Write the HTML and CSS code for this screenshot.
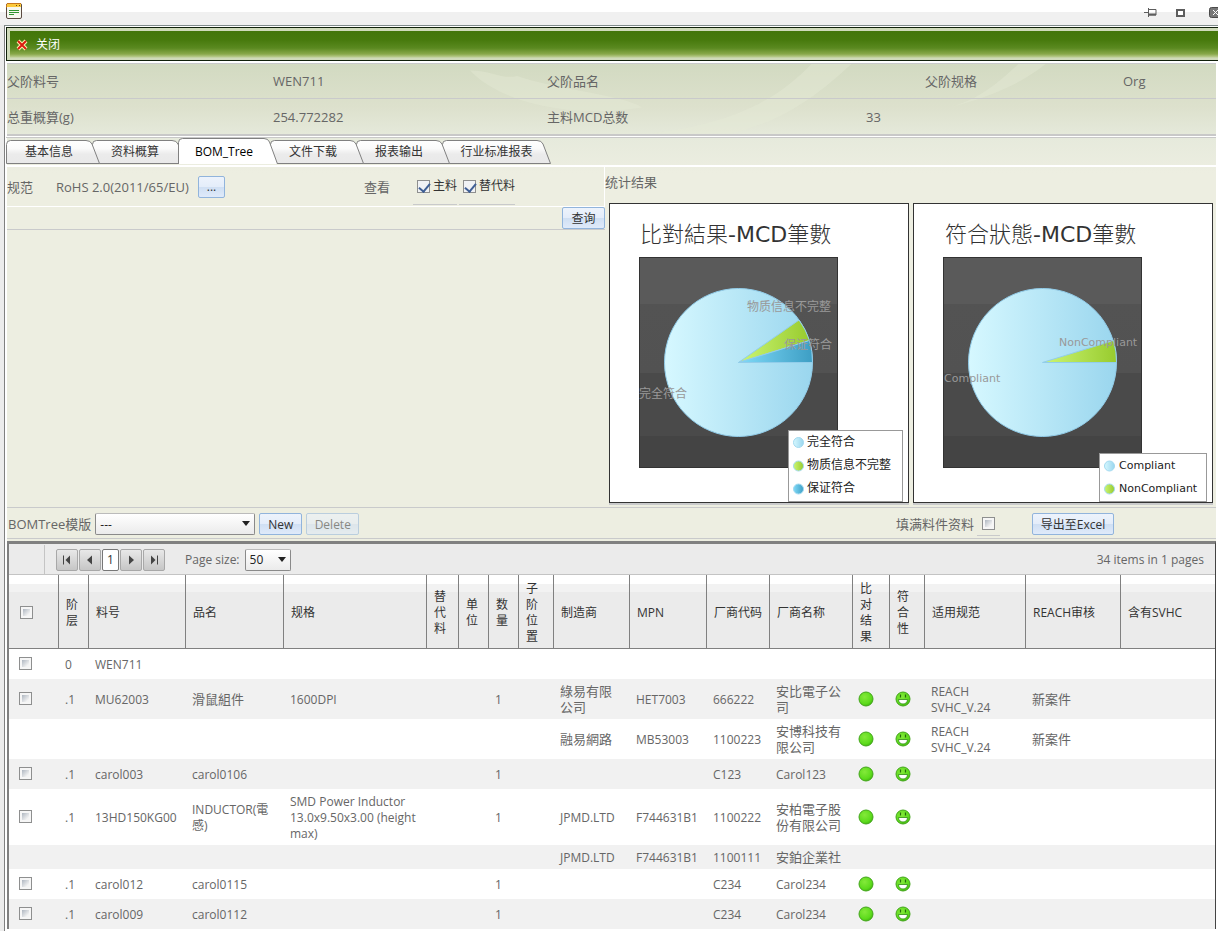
FILE: index.html
```
<!DOCTYPE html>
<html lang="zh-CN">
<head>
<meta charset="utf-8">
<title>BOM_Tree</title>
<link rel="stylesheet" href="styles.css">
</head>
<body>
<svg class="defs" aria-hidden="true">
  <defs>
    <linearGradient id="tabfill" x1="0" y1="0" x2="0" y2="1"><stop offset="0" stop-color="#fff"/><stop offset="0.35" stop-color="#fafafa"/><stop offset="0.6" stop-color="#ebebeb"/><stop offset="1" stop-color="#e9e9e9"/></linearGradient>
    <linearGradient id="blue"><stop offset="0" stop-color="#d6f8ff"/><stop offset="1" stop-color="#9ad6ee"/></linearGradient>
    <linearGradient id="lime"><stop offset="0" stop-color="#ccf674"/><stop offset="1" stop-color="#98cb2e"/></linearGradient>
    <linearGradient id="teal"><stop offset="0" stop-color="#80daf8"/><stop offset="1" stop-color="#3d9ec4"/></linearGradient>
    <linearGradient id="plot" x1="0" y1="0" x2="0" y2="1"><stop offset="0.22" stop-color="#5a5a5a"/><stop offset="0.22" stop-color="#535353"/><stop offset="0.55" stop-color="#525252"/><stop offset="0.55" stop-color="#4a4a4a"/><stop offset="0.85" stop-color="#4a4a4a"/><stop offset="0.85" stop-color="#444"/></linearGradient>
    <radialGradient id="ball" cx="0.4" cy="0.35" r="0.7"><stop offset="0" stop-color="#84e93a"/><stop offset="0.7" stop-color="#5ddb1c"/><stop offset="1" stop-color="#3eb50c"/></radialGradient>
    <symbol id="dot" viewBox="0 0 16 16"><circle cx="8" cy="8" r="7" fill="url(#ball)" stroke="#43a51b"/></symbol>
    <symbol id="smile" viewBox="0 0 16 16"><circle cx="8" cy="8" r="7" fill="url(#ball)" stroke="#43a51b"/><path d="M5.500 3.500v3M10.500 3.500v3" stroke="#246b0b" stroke-width="1.200"/><path d="M3.500 8.500h9c0 2.600-1.800 4.500-4.500 4.500s-4.500-1.900-4.500-4.500z" fill="#fff" stroke="#2f8d12" stroke-width="0.800"/></symbol>
  </defs>
</svg>
<header class="titlebar">
  <svg class="appicon" width="16" height="16" viewBox="0 0 16 16"><rect x="0.500" y="0.500" width="15" height="15" rx="1.500" fill="#f6f7ef" stroke="#5a4a42"/><path d="M1 1h14v3H1z" fill="#fbc93c"/><path d="M0.500 1.500v3M1 0.500h14" stroke="#c8761c"/><path d="M10 2.500h1M13 2.500h1" stroke="#6a4a10"/><path d="M3 7.500h10M3 9.500h10M3 11.500h5" stroke="#2f9430"/></svg>
  <div class="wincmds">
    <button type="button" aria-label="Pin"><svg width="13" height="9" viewBox="0 0 13 9"><path d="M0 4.500h4M4.500 0v9M4.500 1.500h7.500v5.500H4.500" fill="none" stroke="#5d5d5d"/><path d="M5 6.500h7" stroke="#5d5d5d" stroke-width="2"/></svg></button>
    <button type="button" aria-label="Maximize"><svg width="9" height="8" viewBox="0 0 9 8"><rect x="1" y="1" width="7" height="6" fill="#fff" stroke="#5d5d5d" stroke-width="2"/></svg></button>
    <button type="button" aria-label="Close"><svg width="12" height="11" viewBox="0 0 12 11"><rect x="0.500" y="0.500" width="11" height="10" rx="2" fill="#777" stroke="#4a4a4a"/><path d="M4 3l5 5M9 3l-5 5" stroke="#fff"/></svg></button>
  </div>
</header>
<main class="frame">
  <div class="toolbar">
    <button type="button" class="close"><svg width="12" height="12" viewBox="0 0 12 12"><path d="M2 2l8 8M10 2l-8 8" stroke="#fff3b0" stroke-width="4"/><path d="M2 2l8 8M10 2l-8 8" stroke="#dc1a10" stroke-width="2"/></svg>关闭</button>
  </div>
  <div class="page">
    <svg class="swoosh" viewBox="0 0 640 80" preserveAspectRatio="none" aria-hidden="true"><path d="M604 0C580 22 545 38 500 50C540 40 560 16 577 0zM28 8C50 8 60 18 75 14C110 28 180 34 200 48C130 60 60 44 28 8zM410 0C370 40 340 62 290 76H210C300 64 340 34 370 0z"/></svg>
    <dl class="info">
      <dt>父阶料号</dt><dd>WEN711</dd><dt class="span2">父阶品名</dt><dt>父阶规格</dt><dd>Org</dd>
    </dl>
    <dl class="info last">
      <dt>总重概算(g)</dt><dd>254.772282</dd><dt>主料MCD总数</dt><dd>33</dd>
    </dl>
    <nav class="tabs">
      <a href="#"><svg width="94" height="25"><path d="M0.500 24.500V5.500Q0.500 1.500 4.500 1.500H80Q84.500 1.500 86 5L93.500 24.500z"/></svg><span>基本信息</span></a>
      <a href="#"><svg width="94" height="25"><path d="M0.500 24.500V5.500Q0.500 1.500 4.500 1.500H80Q84.500 1.500 86 5L93.500 24.500z"/></svg><span>资料概算</span></a>
      <a href="#" class="on"><svg width="100" height="26"><path d="M0.500 26V4.500Q0.500 0.500 4.500 0.500H86Q90 0.500 91.500 4L99.500 26"/></svg><span>BOM_Tree</span></a>
      <a href="#"><svg width="94" height="25"><path d="M0.500 24.500V5.500Q0.500 1.500 4.500 1.500H80Q84.500 1.500 86 5L93.500 24.500z"/></svg><span>文件下载</span></a>
      <a href="#"><svg width="94" height="25"><path d="M0.500 24.500V5.500Q0.500 1.500 4.500 1.500H80Q84.500 1.500 86 5L93.500 24.500z"/></svg><span>报表输出</span></a>
      <a href="#" class="wide"><svg width="109" height="25"><path d="M0.500 24.500V5.500Q0.500 1.500 4.500 1.500H95Q99.500 1.500 101 5L108.500 24.500z"/></svg><span>行业标准报表</span></a>
    </nav>
    <div class="split">
      <section class="query">
        <div class="qrow">
          <span class="spec">规范</span><span class="rohs">RoHS 2.0(2011/65/EU)</span><button type="button" class="btn dots">...</button>
          <span class="view">查看</span>
          <label class="ck"><input type="checkbox" checked>主料</label>
          <label class="ck"><input type="checkbox" checked>替代料</label>
        </div>
        <div class="qrow2"><button type="button" class="btn">查询</button></div>
      </section>
      <section class="stats">
        <h2>统计结果</h2>
        <div class="charts">
          <svg class="chart" viewBox="0 0 300 300" width="300" height="300" role="img">
            <rect class="box" x="0.500" y="0.500" width="299" height="299"/>
            <text class="title" x="31" y="39">比對結果<tspan>-MCD</tspan>筆數</text>
            <rect class="plot" x="30.500" y="54.500" width="198" height="210"/>
            <circle class="rim" cx="129.500" cy="159.500" r="74" fill="url(#blue)"/>
            <path class="rim" fill="url(#lime)" d="M129.500 159.500L190 117A74 74 0 0 1 200.500 137.500z"/>
            <path class="rim" fill="url(#teal)" d="M129.500 159.500L200.500 137.500A74 74 0 0 1 203.500 159.500z"/>
            <g class="tag"><text x="138" y="108">物质信息不完整</text><text x="175" y="146">保证符合</text><text x="30" y="195">完全符合</text></g>
            <rect class="legend" x="179.500" y="227.500" width="114" height="71"/>
            <g class="key"><circle cx="189.500" cy="239.500" r="5" fill="url(#blue)"/><circle cx="189.500" cy="263" r="5" fill="url(#lime)"/><circle cx="189.500" cy="286" r="5" fill="url(#teal)"/></g>
            <g class="item"><text x="198" y="243">完全符合</text><text x="198" y="266">物质信息不完整</text><text x="198" y="289">保证符合</text></g>
          </svg>
          <svg class="chart" viewBox="0 0 300 300" width="300" height="300" role="img">
            <rect class="box" x="0.500" y="0.500" width="299" height="299"/>
            <text class="title" x="32" y="39">符合狀態<tspan>-MCD</tspan>筆數</text>
            <rect class="plot" x="30.500" y="54.500" width="198" height="210"/>
            <circle class="rim" cx="129.500" cy="159.500" r="74" fill="url(#blue)"/>
            <path class="rim" fill="url(#lime)" d="M129.500 159.500L200.500 137.500A74 74 0 0 1 203.500 159.500z"/>
            <g class="tag latin"><text x="146" y="143">NonCompliant</text><text x="31" y="179">Compliant</text></g>
            <rect class="legend" x="186.500" y="250.500" width="107" height="48"/>
            <g class="key"><circle cx="196.500" cy="263" r="5" fill="url(#blue)"/><circle cx="196.500" cy="286" r="5" fill="url(#lime)"/></g>
            <g class="item latin"><text x="206" y="266">Compliant</text><text x="206" y="289">NonCompliant</text></g>
          </svg>
        </div>
      </section>
    </div>
    <div class="tmpl">
      <label for="tpl">BOMTree模版</label>
      <span class="combo"><select id="tpl"><option>---</option></select></span>
      <button type="button" class="btn">New</button>
      <button type="button" class="btn" disabled>Delete</button>
      <label class="fill" for="fill">填满料件资料</label><span class="ckline"><input type="checkbox" id="fill"></span>
      <button type="button" class="btn excel">导出至Excel</button>
    </div>
    <section class="grid">
      <div class="pager">
        <span class="notch"></span>
        <button type="button" aria-label="First"><svg width="10" height="10"><path d="M1.500 0.500v9" stroke="#444"/><path d="M8 0.500v9L3.500 5z" fill="#444"/></svg></button>
        <button type="button" aria-label="Previous"><svg width="10" height="10"><path d="M7 0.500v9L2 5z" fill="#444"/></svg></button>
        <button type="button" class="cur">1</button>
        <button type="button" aria-label="Next"><svg width="10" height="10"><path d="M3 0.500v9L8 5z" fill="#444"/></svg></button>
        <button type="button" aria-label="Last"><svg width="10" height="10"><path d="M8.500 0.500v9" stroke="#444"/><path d="M2 0.500v9L6.500 5z" fill="#444"/></svg></button>
        <label for="ps">Page size:</label>
        <span class="combo small"><select id="ps"><option>50</option></select></span>
        <span class="count">34 items in 1 pages</span>
      </div>
      <table>
        <colgroup><col style="width:50px"><col style="width:30px"><col style="width:97px"><col style="width:98px"><col style="width:143px"><col style="width:32px"><col style="width:30px"><col style="width:30px"><col style="width:35px"><col style="width:76px"><col style="width:77px"><col style="width:63px"><col style="width:83px"><col style="width:37px"><col style="width:35px"><col style="width:101px"><col style="width:95px"><col></colgroup>
        <thead><tr><th><input type="checkbox" aria-label="All"></th><th>阶层</th><th>料号</th><th>品名</th><th>规格</th><th>替代料</th><th>单位</th><th>数量</th><th class="one">子阶位置</th><th>制造商</th><th>MPN</th><th>厂商代码</th><th>厂商名称</th><th class="one">比对结果</th><th class="one">符合性</th><th>适用规范</th><th>REACH审核</th><th>含有SVHC</th></tr></thead>
        <tbody>
          <tr class="h30"><td><input type="checkbox" aria-label="WEN711"></td><td>0</td><td>WEN711</td><td></td><td></td><td></td><td></td><td></td><td></td><td></td><td></td><td></td><td></td><td></td><td></td><td></td><td></td><td></td></tr>
          <tr class="h40"><td><input type="checkbox" aria-label="MU62003"></td><td>.1</td><td>MU62003</td><td class="zh">滑鼠組件</td><td>1600DPI</td><td></td><td></td><td>1</td><td></td><td class="zh">綠易有限公司</td><td>HET7003</td><td>666222</td><td class="zh">安比電子公司</td><td class="ic"><svg><use href="#dot"/></svg></td><td class="ic"><svg><use href="#smile"/></svg></td><td>REACH SVHC_V.24</td><td class="zh">新案件</td><td></td></tr>
          <tr class="h40"><td></td><td></td><td></td><td></td><td></td><td></td><td></td><td></td><td></td><td class="zh">融易網路</td><td>MB53003</td><td>1100223</td><td class="zh">安博科技有限公司</td><td class="ic"><svg><use href="#dot"/></svg></td><td class="ic"><svg><use href="#smile"/></svg></td><td>REACH SVHC_V.24</td><td class="zh">新案件</td><td></td></tr>
          <tr class="h30"><td><input type="checkbox" aria-label="carol003"></td><td>.1</td><td>carol003</td><td>carol0106</td><td></td><td></td><td></td><td>1</td><td></td><td></td><td></td><td>C123</td><td>Carol123</td><td class="ic"><svg><use href="#dot"/></svg></td><td class="ic"><svg><use href="#smile"/></svg></td><td></td><td></td><td></td></tr>
          <tr class="h56"><td><input type="checkbox" aria-label="13HD150KG00"></td><td>.1</td><td>13HD150KG00</td><td>INDUCTOR(電感)</td><td>SMD Power Inductor 13.0x9.50x3.00 (height max)</td><td></td><td></td><td>1</td><td></td><td>JPMD.LTD</td><td>F744631B1</td><td>1100222</td><td class="zh">安柏電子股份有限公司</td><td class="ic"><svg><use href="#dot"/></svg></td><td class="ic"><svg><use href="#smile"/></svg></td><td></td><td></td><td></td></tr>
          <tr class="h24"><td></td><td></td><td></td><td></td><td></td><td></td><td></td><td></td><td></td><td>JPMD.LTD</td><td>F744631B1</td><td>1100111</td><td class="zh">安鉑企業社</td><td></td><td></td><td></td><td></td><td></td></tr>
          <tr class="h30"><td><input type="checkbox" aria-label="carol012"></td><td>.1</td><td>carol012</td><td>carol0115</td><td></td><td></td><td></td><td>1</td><td></td><td></td><td></td><td>C234</td><td>Carol234</td><td class="ic"><svg><use href="#dot"/></svg></td><td class="ic"><svg><use href="#smile"/></svg></td><td></td><td></td><td></td></tr>
          <tr class="h30"><td><input type="checkbox" aria-label="carol009"></td><td>.1</td><td>carol009</td><td>carol0112</td><td></td><td></td><td></td><td>1</td><td></td><td></td><td></td><td>C234</td><td>Carol234</td><td class="ic"><svg><use href="#dot"/></svg></td><td class="ic"><svg><use href="#smile"/></svg></td><td></td><td></td><td></td></tr>
        </tbody>
      </table>
    </section>
  </div>
</main>
</body>
</html>
```

FILE: styles.css
```
* { box-sizing: border-box; }
body {
  margin: 0;
  height: 100vh;
  overflow: hidden;
  display: flex;
  flex-direction: column;
  background: #ececec;
  color: #666;
  font: 13px/16px "Open Sans", "Noto Sans CJK SC", sans-serif;
}
button, select { font: inherit; color: inherit; padding: 0; }
button { cursor: pointer; }
.defs { position: absolute; width: 0; height: 0; }

.titlebar {
  flex: none;
  height: 25px;
  display: flex;
  justify-content: space-between;
  align-items: flex-start;
  padding: 3px 0 0 6px;
  background: linear-gradient(#fff 12px, #f0f0f0 12px);
}
.wincmds { display: flex; align-items: center; gap: 19px; margin-right: -3px; padding-top: 4px; }
.wincmds button { display: flex; border: 0; background: none; }
.wincmds button:last-child { margin-left: 5px; }

.frame {
  flex: 1;
  min-height: 0;
  overflow: hidden;
  margin-left: 4px;
  padding: 1px 0 0 1px;
  border-left: 1px solid #808080;
  border-top: 1px solid #808b8b;
  background: #fff;
}
.toolbar {
  height: 34px;
  border: 1px solid #10200a;
  border-right: 0;
  padding: 3px 0 2px 3px;
  background: #cfdab9;
}
.close {
  display: flex;
  align-items: center;
  gap: 8px;
  width: 100%;
  height: 27px;
  border: 0;
  padding-left: 6px;
  color: #fff;
  font-size: 12px;
  background: linear-gradient(#43760a 0, #477a0d 9px, #5a8920 17px, #88a849 23px, #b9cb8d 26px, #cfdab9);
}
.page {
  position: relative;
  margin: 2px 2px 0 1px;
  background: linear-gradient(#d2dac1, #dde1cd 45px, #e6eadc 75px, #edeee1 110px);
}
.swoosh { position: absolute; left: 36%; top: 0; width: 53%; height: 74px; }
.swoosh path { fill: #e6ead8; opacity: 0.4; }

.info {
  position: relative;
  display: grid;
  grid-template-columns: 266fr 274fr 319fr 59fr 198fr 93fr;
  align-items: center;
  margin: 0;
  height: 36px;
  border-bottom: 1px solid #c9cacb;
}
.info:first-of-type { border-top: 1px solid #c9cacb; }
.info.last { height: 37px; border-bottom: 2px solid #c8c8c8; }
.info dd { margin: 0; }
.span2 { grid-column: span 2; }

.tabs {
  display: flex;
  align-items: flex-end;
  height: 29px;
  margin: 1px 0 0 -1px;
  padding-bottom: 1px;
  border-top: 1px solid #c8c8c8;
  border-bottom: 1px solid #fff;
  outline: 1px solid #fff;
}
.tabs a {
  position: relative;
  z-index: 1;
  display: flex;
  justify-content: center;
  margin-right: -8px;
  color: #333;
  font-size: 12px;
  text-decoration: none;
}
.tabs a:nth-child(1) { z-index: 5; }
.tabs a:nth-child(2) { z-index: 4; }
.tabs a:nth-child(4) { z-index: 3; }
.tabs a:nth-child(5) { z-index: 2; }
.tabs a.on { z-index: 6; color: #000; }
.tabs svg { display: block; }
.tabs path { fill: url(#tabfill); stroke: #808080; }
.tabs .on path { fill: #fff; }
.tabs span { position: absolute; inset: 5px 8px 4px 0; text-align: center; }
.tabs .wide span { inset: 5px 0 4px; }
.tabs .on span { inset: 6px 8px 4px 0; }

.split { display: flex; min-height: 342px; border-bottom: 1px solid #c9cacb; }
.query { flex: 598 1 0; }
.stats { flex: 611 1 0; }
.qrow { display: flex; align-items: center; height: 41px; padding-top: 1px; border: solid #fff; border-width: 0 1px 1px 0; }
.spec { width: 49px; }
.rohs { width: 142px; }
.dots { width: 27px; }
.view { width: 49px; margin-left: 139px; }
.ck { display: flex; align-items: center; gap: 3px; height: 36px; padding-left: 4px; margin-right: 2px; border-bottom: 1px solid #c9cacb; color: #333; font-size: 12px; }
.qrow2 { display: flex; justify-content: flex-end; height: 23px; border-bottom: 1px solid #c9cacb; }
.qrow2 .btn { width: 43px; }
.btn {
  height: 22px;
  padding-top: 1px;
  border: 1px solid #91b4dc;
  border-radius: 2px;
  background: linear-gradient(#edf3fc, #e4edfa 48%, #cfdff3 50%, #dfeafa);
  color: #333;
  font-size: 12px;
}
.btn:disabled { opacity: 0.55; }
input[type="checkbox"] {
  appearance: none;
  display: block;
  flex: none;
  width: 13px;
  height: 13px;
  margin: 0;
  border: 1px solid #8e8f8f;
  background: linear-gradient(135deg, #aeb6c0, #f4f4f4 80%) content-box, #f6f6f6;
  padding: 2px;
  position: relative;
}
input[type="checkbox"]:checked { background: #f0f2f5; }
input[type="checkbox"]:checked::after {
  content: "";
  position: absolute;
  left: 3px;
  top: 0;
  width: 5px;
  height: 9px;
  border: solid #3f5f95;
  border-width: 0 2px 2px 0;
  transform: rotate(40deg);
}

.stats h2 { margin: 0; height: 37px; padding-top: 8px; font-size: 13px; font-weight: 400; }
.charts { display: flex; gap: 4px; padding-left: 4px; }
.chart { flex: none; display: block; box-shadow: 0 2px 0 #c9cacb; }
.box { fill: #fff; stroke: #333; }
.title { fill: #333; font: 300 22px "Noto Sans CJK TC", sans-serif; }
.title tspan { font-family: "DejaVu Sans", sans-serif; font-weight: 400; }
.plot { fill: url(#plot); stroke: #333; }
.rim { stroke: #92cdea; }
.tag { fill: #999; font: 12px "Noto Sans CJK SC", sans-serif; }
.item { fill: #222; font: 12px "Noto Sans CJK SC", sans-serif; }
.latin { font: 11px "DejaVu Sans", sans-serif; }
.legend { fill: #fff; stroke: #999; }
.key circle { stroke: #a3daf0; }

.tmpl { display: flex; align-items: center; height: 31px; padding-left: 1px; padding-top: 2px; border-bottom: 1px solid #c9cacb; }
.combo { position: relative; display: block; width: 160px; margin: 0 4px; }
.combo select {
  display: block;
  appearance: none;
  width: 100%;
  height: 22px;
  padding: 1px 0 0 4px;
  border: 1px solid #8a8a8a;
  border-top-color: #bbb;
  border-radius: 2px;
  background: linear-gradient(#fff, #ebebeb);
  color: #222;
  font-size: 12px;
}
.combo::after {
  content: "";
  position: absolute;
  right: 5px;
  top: 8px;
  border: 4px solid transparent;
  border-top: 5px solid #222;
  border-bottom: 0;
}
.tmpl .btn { width: 43px; margin-right: 4px; }
.tmpl .btn:disabled { width: 53px; }
.tmpl .fill { margin-left: auto; }
.ckline { margin: 0 32px 0 3px; padding: 4px 5px 5px; border-bottom: 1px solid #c9cacb; }
.tmpl .excel { width: 82px; margin-right: 102px; }

.grid { border: solid #808080; border-width: 3px 1px 0 2px; border-right-color: #444; background: #fff; margin: 2px 0 400px; }
.pager { display: flex; align-items: center; height: 31px; padding: 1px 11px 0 0; background: #ebebeb; border-bottom: 1px solid #c4c4c4; }
.notch { width: 36px; height: 30px; margin-right: 11px; border-right: 1px solid #c4c4c4; }
.pager button {
  display: flex;
  align-items: center;
  justify-content: center;
  width: 22px;
  height: 22px;
  margin-right: 1px;
  border: 1px solid #a8a8a8;
  border-radius: 2px;
  background: linear-gradient(#e8e8e8, #c6c6c6);
}
.pager .cur { width: 17px; border-color: #777; background: #fff; color: #333; font-size: 12px; }
.pager label { margin-left: 19px; font-size: 12px; }
.small { width: 46px; margin-left: 5px; }
.count { margin-left: auto; font-size: 12px; }

table { width: 100%; table-layout: fixed; border-collapse: separate; border-spacing: 0; }
th {
  height: 74px;
  padding: 2px 6px 0 7px;
  border-right: 1px solid #808080;
  border-bottom: 1px solid #808080;
  background: linear-gradient(#fff 9px, #f2f2f2 9px, #f2f2f2 17px, #ebebeb 17px);
  color: #333;
  font-size: 12px;
  font-weight: 400;
  text-align: left;
}
th:last-child { border-right: 0; }
th:nth-child(12) { padding-right: 4px; }
th.one { padding-right: 14px; }
th:first-child { padding-left: 11px; }
td { padding: 2px 6px 0; font-size: 12px; }
td:first-child { padding: 0 6px 2px 10px; }
td.zh { padding-top: 0; font-size: 13px; }
td.ic { padding: 0 5px 1px; }
td svg { display: block; width: 16px; height: 16px; }
tbody tr:nth-child(even) { background: #f1f1f1; }
.h24 td { height: 24px; }
.h30 td { height: 30px; }
.h40 td { height: 40px; }
.h56 td { height: 56px; }
```
